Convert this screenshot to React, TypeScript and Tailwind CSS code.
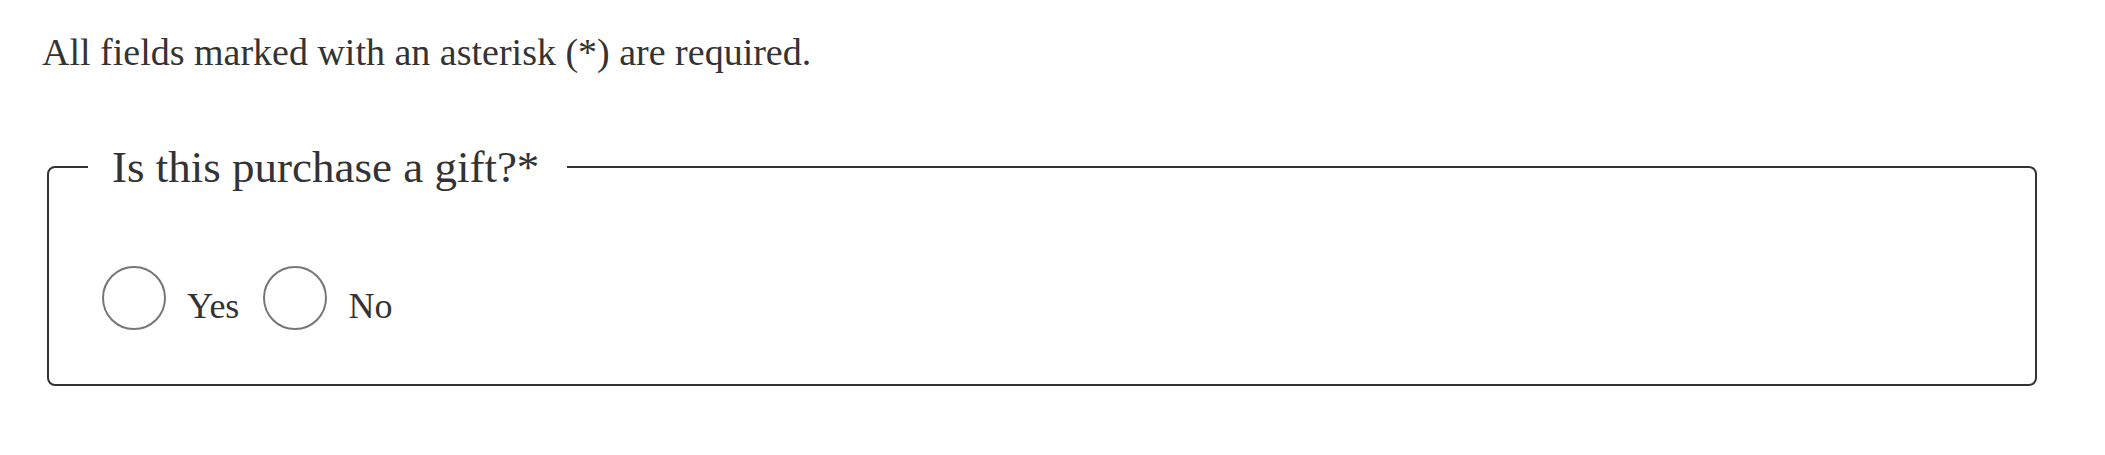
import React from 'react';

interface RadioOptionProps {
  name: string;
  value: string;
  label: string;
}

const RadioOption: React.FC<RadioOptionProps> = ({ name, value, label }) => (
  <label className="flex items-start cursor-pointer">
    <input
      type="radio"
      name={name}
      value={value}
      className="appearance-none w-[64px] h-[64px] rounded-full border-2 border-[#767676] bg-white m-0 shrink-0"
    />
    <span className="ml-[21px] mr-[24px] mt-[18px] text-[36px] leading-[44px]">{label}</span>
  </label>
);

const App: React.FC = () => {
  return (
    <div
      className="min-h-[455px] bg-white text-[#333] pt-[30px]"
      style={{ fontFamily: '"Liberation Serif", "Times New Roman", serif' }}
    >
      <p className="pl-[42px] text-[38px] leading-[44px]">
        All fields marked with an asterisk (*) are required.
      </p>

      <fieldset className="ml-[47px] mt-[67px] w-[1990px] border-2 border-[#333] rounded-[8px] px-[39px] pt-[73px] pb-[54px]">
        <legend className="pl-[24px] pr-[28px] text-[45px] leading-[52px]">
          Is this purchase a gift?*
        </legend>
        <div className="flex ml-[14px]">
          <RadioOption name="gift" value="yes" label="Yes" />
          <RadioOption name="gift" value="no" label="No" />
        </div>
      </fieldset>
    </div>
  );
};

export default App;
